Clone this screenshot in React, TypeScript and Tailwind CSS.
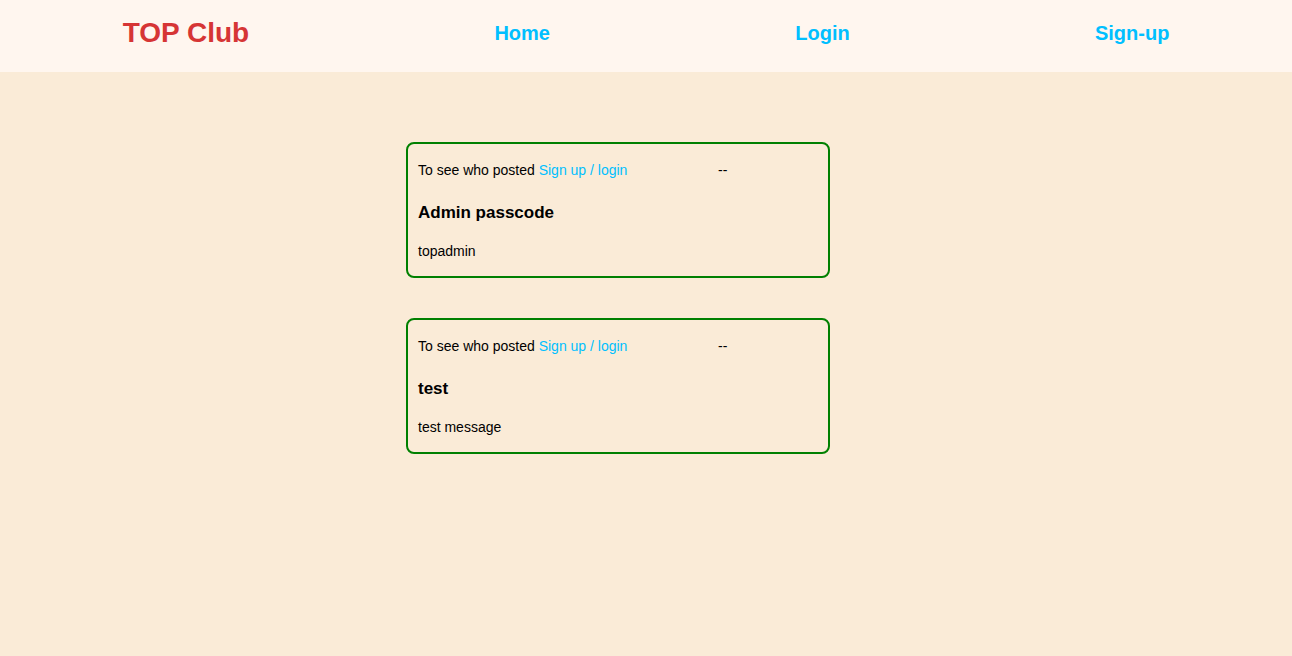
const posts = [
  { title: "Admin passcode", body: "topadmin" },
  { title: "test", body: "test message" },
];

export default function App() {
  return (
    <div className="min-h-screen bg-[#faebd7] font-['Liberation_Sans',Arial,sans-serif] text-black">
      <header className="flex h-[72px] items-center justify-around bg-[#fff6ef] pb-[6px]">
        <h1 className="text-[28px] font-bold text-[#d63535]">TOP Club</h1>
        <a className="text-[20px] font-bold text-[#00bfff]" href="#">
          Home
        </a>
        <a className="text-[20px] font-bold text-[#00bfff]" href="#">
          Login
        </a>
        <a className="text-[20px] font-bold text-[#00bfff]" href="#">
          Sign-up
        </a>
      </header>

      <main className="flex flex-col gap-10 pl-[406px] pt-[70px]">
        {posts.map((post) => (
          <article key={post.title} className="w-[424px] rounded-lg border-2 border-[#008000] px-[10px] pt-[10px] pb-[17px]">
            <div className="flex h-8 items-center justify-between text-[14px]">
              <span>
                To see who posted{" "}
                <a className="text-[#00bfff]" href="#">
                  Sign up / login
                </a>
              </span>
              <span>--</span>
              <span></span>
            </div>
            <h2 className="mt-[17px] text-[17px] leading-5 font-bold">{post.title}</h2>
            <p className="mt-[20px] text-[14px] leading-4">{post.body}</p>
          </article>
        ))}
      </main>
    </div>
  );
}
